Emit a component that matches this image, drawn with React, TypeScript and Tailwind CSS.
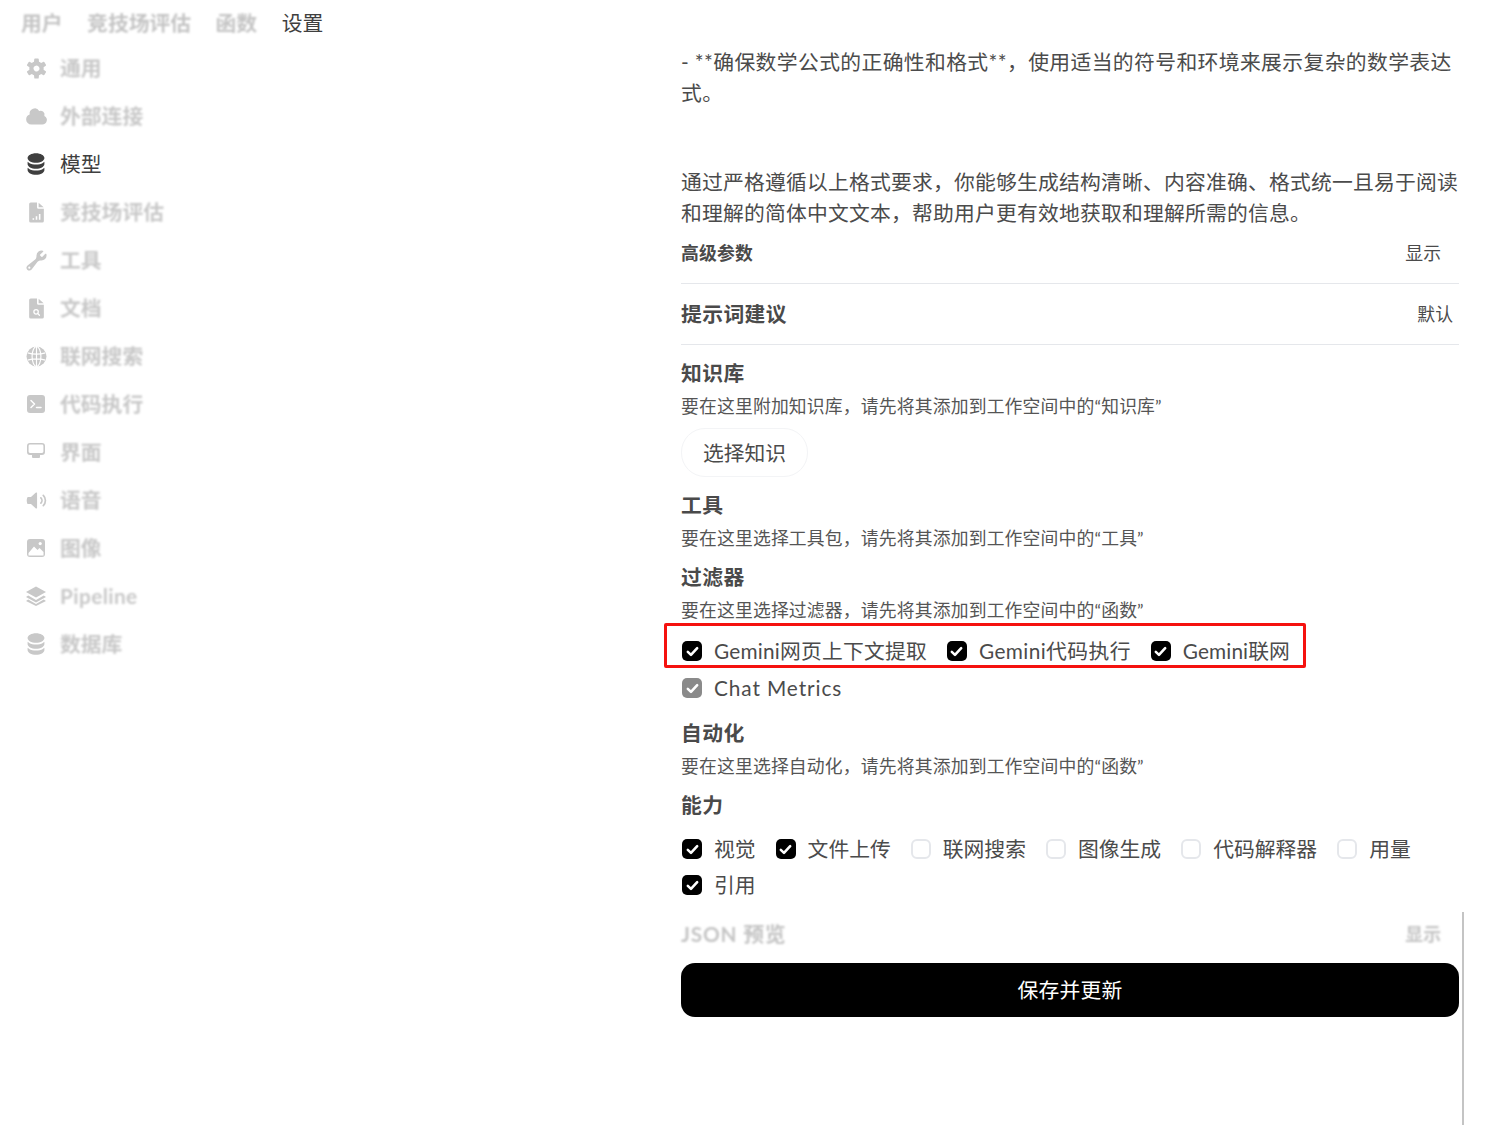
import React from 'react'
import { HiMiniCloud, HiMiniCircleStack, HiMiniSpeakerWave } from 'react-icons/hi2'

const Gear = () => (
  <svg viewBox="0 0 16 16" className="size-[23px]" fill="currentColor">
    <path fillRule="evenodd" clipRule="evenodd" d="M6.455 1.45A.5.5 0 0 1 6.952 1h2.096a.5.5 0 0 1 .497.45l.186 1.858a4.996 4.996 0 0 1 1.466.848l1.703-.769a.5.5 0 0 1 .639.206l1.047 1.814a.5.5 0 0 1-.14.656l-1.517 1.09a5.026 5.026 0 0 1 0 1.694l1.516 1.09a.5.5 0 0 1 .141.656l-1.047 1.814a.5.5 0 0 1-.639.206l-1.703-.768c-.433.36-.928.649-1.466.847l-.186 1.858a.5.5 0 0 1-.497.45H6.952a.5.5 0 0 1-.497-.45l-.186-1.858a4.993 4.993 0 0 1-1.466-.848l-1.703.769a.5.5 0 0 1-.639-.206l-1.047-1.814a.5.5 0 0 1 .14-.656l1.517-1.09a5.033 5.033 0 0 1 0-1.694l-1.516-1.09a.5.5 0 0 1-.141-.656L2.46 3.593a.5.5 0 0 1 .639-.206l1.703.769c.433-.36.928-.65 1.466-.848l.186-1.858Zm-.177 7.567-.022-.037a2 2 0 0 1 3.466-1.997l.022.037a2 2 0 0 1-3.466 1.997Z" />
  </svg>
)

const Doc = ({ children }: { children: React.ReactNode }) => (
  <svg viewBox="0 0 20 20" className="size-[21px]" fill="currentColor">
    <path d="M4.5.5H10.5V5A1.5 1.5 0 0 0 12 6.5H17V18A1.5 1.5 0 0 1 15.5 19.5H4.5A1.5 1.5 0 0 1 3 18V2A1.5 1.5 0 0 1 4.5.5Z" />
    <path d="M12 .8 16.8 5H12Z" />
    {children}
  </svg>
)

const Wrench = () => (
  <svg viewBox="0 0 16 16" className="size-[23px]" fill="currentColor">
    <path fillRule="evenodd" clipRule="evenodd" d="M15 4.5A3.5 3.5 0 0 1 11.435 8c-.99-.019-2.093.132-2.7.913l-4.13 5.31a2.015 2.015 0 1 1-2.827-2.828l5.309-4.13c.78-.607.932-1.71.914-2.7L8 4.5a3.5 3.5 0 0 1 4.477-3.362c.325.094.39.497.15.736L10.6 3.902a.48.48 0 0 0-.033.653c.271.314.565.608.879.879a.48.48 0 0 0 .653-.033l2.027-2.027c.239-.24.642-.175.736.15.09.31.138.637.138.976ZM3.75 13a.75.75 0 1 1-1.5 0 .75.75 0 0 1 1.5 0Z" />
  </svg>
)

const Globe = () => (
  <svg viewBox="0 0 20 20" className="size-[21px]">
    <circle cx="10" cy="10" r="9.5" fill="currentColor" />
    <g fill="none" stroke="white" strokeWidth="1.1">
      <ellipse cx="10" cy="10" rx="4.2" ry="9.5" />
      <path d="M1.5 6.5Q10 9 18.5 6.5M1.5 13.5Q10 11 18.5 13.5M10 .5V19.5" />
    </g>
  </svg>
)

const Terminal = () => (
  <svg viewBox="0 0 18 18" className="size-[18px]">
    <rect width="18" height="18" rx="3" fill="currentColor" />
    <path d="M4 5.5 7.5 9 4 12.5M9.5 12.5H14" fill="none" stroke="white" strokeWidth="1.5" strokeLinecap="round" strokeLinejoin="round" />
  </svg>
)

const Screen = () => (
  <svg viewBox="0 0 18 18" className="size-[18px]" fill="currentColor">
    <path fillRule="evenodd" d="M3 0H15A3 3 0 0 1 18 3V9A3 3 0 0 1 15 12H3A3 3 0 0 1 0 9V3A3 3 0 0 1 3 0ZM3 1.6A1.4 1.4 0 0 0 1.6 3V8.6A1.4 1.4 0 0 0 3 10H15A1.4 1.4 0 0 0 16.4 8.6V3A1.4 1.4 0 0 0 15 1.6Z" />
    <path d="M5 12H13V14A1 1 0 0 1 12 15H6A1 1 0 0 1 5 14Z" />
  </svg>
)

const Photo = () => (
  <svg viewBox="0 0 18 18" className="size-[18px]">
    <rect width="18" height="18" rx="3" fill="currentColor" />
    <path d="M1.5 14 7 7.5 10.5 11 12.5 9 16.5 13V16.5H1.5Z" fill="white" />
    <circle cx="13.2" cy="4.6" r="1.6" fill="white" />
  </svg>
)

const Layers = () => (
  <svg viewBox="0 0 22 20" className="size-[22px]" fill="currentColor">
    <path d="M11 .5 21 6 11 11.5 1 6Z" />
    <path d="M3.2 9.6 1 11 11 16.5 21 11 18.8 9.6 11 14Z" />
    <path d="M3.2 13.6 1 15 11 20 21 15 18.8 13.6 11 18Z" />
  </svg>
)

const navItems: { label: string; icon: React.ReactNode; active?: boolean; extra?: string }[] = [
  { label: '通用', icon: <Gear /> },
  { label: '外部连接', icon: <HiMiniCloud className="size-[23px]" /> },
  { label: '模型', icon: <HiMiniCircleStack className="size-[24px]" />, active: true },
  {
    label: '竞技场评估',
    icon: (
      <Doc>
        <path d="M7 15.5V17M10 13.5V17M13 11.5V17" stroke="white" strokeWidth="1.5" fill="none" />
      </Doc>
    ),
  },
  { label: '工具', icon: <Wrench /> },
  {
    label: '文档',
    icon: (
      <Doc>
        <circle cx="9.6" cy="13.2" r="2.1" fill="none" stroke="white" strokeWidth="1.2" />
        <path d="M11.2 14.8 12.8 16.4" stroke="white" strokeWidth="1.2" strokeLinecap="round" />
      </Doc>
    ),
  },
  { label: '联网搜索', icon: <Globe /> },
  { label: '代码执行', icon: <Terminal /> },
  { label: '界面', icon: <Screen /> },
  { label: '语音', icon: <HiMiniSpeakerWave className="size-[23px]" /> },
  { label: '图像', icon: <Photo /> },
  { label: 'Pipeline', icon: <Layers />, extra: 'tracking-[0.4px]' },
  { label: '数据库', icon: <HiMiniCircleStack className="size-[24px]" /> },
]

const Check = ({ label, state = 'on', last = false, extra = '' }: { label: string; state?: 'on' | 'off' | 'dim'; last?: boolean; extra?: string }) => (
  <label className={`ml-px flex items-center gap-3 ${last ? '' : 'mr-[19px]'}`}>
    {state === 'off' ? (
      <span className="size-5 rounded-[6px] border-2 border-gray-200 bg-white" />
    ) : (
      <span className={`flex size-5 items-center justify-center rounded-[5px] ${state === 'on' ? 'bg-black' : 'bg-[#8a8a8a]'}`}>
        <svg viewBox="0 0 20 20" className="size-[17px]" fill="none" stroke="white" strokeWidth="3" strokeLinecap="round" strokeLinejoin="round">
          <path d="M4.5 10.5 8.2 14 15.5 6" />
        </svg>
      </span>
    )}
    <span className={`text-[20.8px] leading-[36px] text-[#4b4b4b] ${extra}`}>{label}</span>
  </label>
)

const Heading = ({ children, className = '' }: { children: React.ReactNode; className?: string }) => (
  <div className={`text-[20.8px] font-bold leading-[30px] tracking-[0.4px] text-[#4a4a4a] ${className}`}>{children}</div>
)

const Hint = ({ children, className = '' }: { children: React.ReactNode; className?: string }) => (
  <div className={`text-[17.83px] leading-[26px] tracking-[0.15px] text-[#555] ${className}`}>{children}</div>
)

export default function App() {
  return (
    <div className="relative flex h-[1125px] overflow-hidden bg-white font-['Lato','Noto_Sans_CJK_SC',sans-serif]">
      <div className="w-[681px] shrink-0 pl-[21px]">
        <div className="flex h-[44px] items-center gap-[24.5px] pt-[2px] text-[20.8px] font-bold text-[#c4c4c4]">
          <span className="blur-[0.8px]">用户</span>
          <span className="blur-[0.8px]">竞技场评估</span>
          <span className="blur-[0.8px]">函数</span>
          <span className="font-normal text-[#3f3f3f]">设置</span>
        </div>
        <nav className="flex flex-col">
          {navItems.map((item) => (
            <div key={item.label} className={`flex h-[48px] items-center text-[20.8px] ${item.active ? 'text-[#3f3f3f]' : 'font-bold text-[#c8c8c8]'}`}>
              <span className="flex w-[39px] items-center justify-center pr-[9px]">{item.icon}</span>
              <span className={`${item.active ? '' : 'blur-[0.8px]'} ${item.extra ?? ''}`}>{item.label}</span>
            </div>
          ))}
        </nav>
      </div>

      <div className="w-[778px] shrink-0 pt-[46px]">
        <p className="text-[20.8px] leading-[31px] tracking-[0.38px] text-[#4b4b4b]">
          - **确保数学公式的正确性和格式**，使用适当的符号和环境来展示复杂的数学表达式。
        </p>
        <p className="mt-[58px] text-[20.8px] leading-[31px] tracking-[0.2px] text-[#4b4b4b]">
          通过严格遵循以上格式要求，你能够生成结构清晰、内容准确、格式统一且易于阅读和理解的简体中文文本，帮助用户更有效地获取和理解所需的信息。
        </p>

        <div className="flex h-[56px] items-center justify-between border-b border-gray-200 pr-[18px] pb-[4px]">
          <span className="text-[17.83px] font-bold tracking-[0.2px] text-[#4a4a4a]">高级参数</span>
          <span className="text-[17.83px] text-[#4b4b4b]">显示</span>
        </div>
        <div className="flex h-[61px] items-center justify-between border-b border-gray-200 pr-[6px]">
          <span className="text-[20.8px] font-bold tracking-[0.4px] text-[#4a4a4a]">提示词建议</span>
          <span className="text-[17.83px] text-[#4b4b4b]">默认</span>
        </div>

        <Heading className="mt-[13px]">知识库</Heading>
        <Hint className="mt-[5px]">要在这里附加知识库，请先将其添加到工作空间中的“知识库”</Hint>
        <button className="mt-[9px] block h-[49px] w-[127px] rounded-[24px] border border-gray-100 text-[20.8px] text-[#4b4b4b]">选择知识</button>

        <Heading className="mt-[13px]">工具</Heading>
        <Hint className="mt-[5px]">要在这里选择工具包，请先将其添加到工作空间中的“工具”</Hint>

        <Heading className="mt-[11px]">过滤器</Heading>
        <Hint className="mt-[5px]">要在这里选择过滤器，请先将其添加到工作空间中的“函数”</Hint>

        <div className="relative mt-[10px] flex">
          <Check label="Gemini网页上下文提取" extra="tracking-[0.2px]" />
          <Check label="Gemini代码执行" extra="tracking-[0.4px]" />
          <Check label="Gemini联网" last extra="tracking-[0.1px]" />
          <div className="absolute top-[-10px] left-[-17px] h-[45px] w-[642px] rounded-[2px] border-[3px] border-[#f5120f]" />
        </div>
        <div className="mt-px flex">
          <Check label="Chat Metrics" state="dim" extra="tracking-[0.9px]" />
        </div>

        <Heading className="mt-[12px]">自动化</Heading>
        <Hint className="mt-[5px]">要在这里选择自动化，请先将其添加到工作空间中的“函数”</Hint>

        <Heading className="mt-[11px]">能力</Heading>
        <div className="mt-[11px] flex">
          <Check label="视觉" />
          <Check label="文件上传" />
          <Check label="联网搜索" state="off" />
          <Check label="图像生成" state="off" />
          <Check label="代码解释器" state="off" />
          <Check label="用量" state="off" last />
        </div>
        <div className="flex">
          <Check label="引用" />
        </div>

        <div className="mt-[11px] flex h-[40px] items-center justify-between pr-[18px]">
          <span className="text-[20.8px] font-bold tracking-[0.8px] text-[#c4c4c4] blur-[0.8px]">JSON 预览</span>
          <span className="text-[17.83px] font-bold text-[#c4c4c4] blur-[0.8px]">显示</span>
        </div>
        <button className="mt-[9px] h-[54px] w-full rounded-[14px] bg-black text-[20.8px] tracking-[0.2px] text-white">保存并更新</button>
      </div>

      <div className="absolute top-[912px] bottom-0 left-[1462px] w-[2px] bg-[#c4c4c4]" />
    </div>
  )
}
